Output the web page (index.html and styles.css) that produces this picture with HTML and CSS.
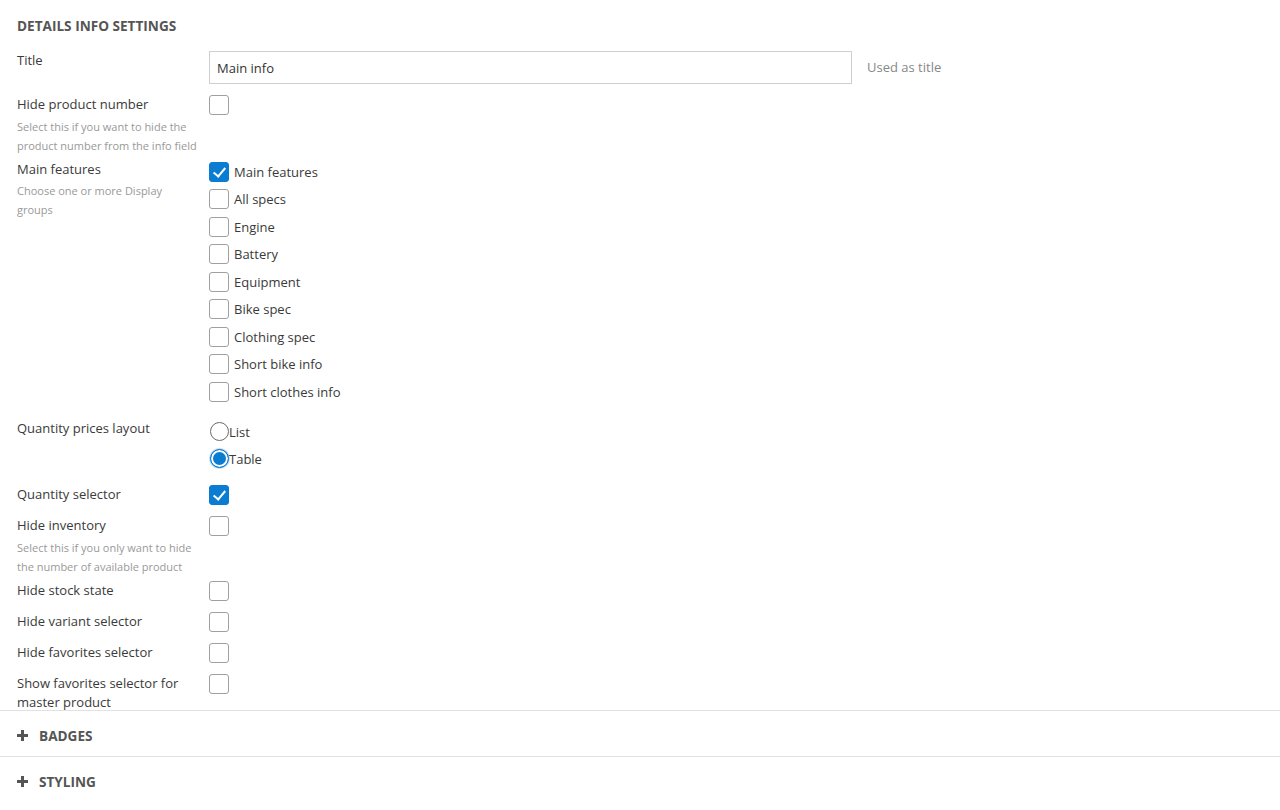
FILE: index.html
```html
<!DOCTYPE html>
<html lang="en">
<head>
    <meta charset="UTF-8">
    <title>Details info settings</title>
    <link rel="stylesheet" href="styles.css">
</head>
<body>
    <div id="settings">
        <h3 class="section-title">Details info settings</h3>

        <div class="field-row">
            <div class="field-label">Title</div>
            <div class="field-control">
                <input type="text" class="text-input" value="Main info">
                <span class="field-hint">Used as title</span>
            </div>
        </div>

        <div class="field-row">
            <div class="field-label">
                Hide product number
                <div class="field-help">Select this if you want to hide the product number from the info field</div>
            </div>
            <div class="field-control"><input type="checkbox" class="check"></div>
        </div>

        <div class="field-row">
            <div class="field-label">
                Main features
                <div class="field-help">Choose one or more Display groups</div>
            </div>
            <div class="option-list">
                <label class="option"><input type="checkbox" class="check" checked>Main features</label>
                <label class="option"><input type="checkbox" class="check">All specs</label>
                <label class="option"><input type="checkbox" class="check">Engine</label>
                <label class="option"><input type="checkbox" class="check">Battery</label>
                <label class="option"><input type="checkbox" class="check">Equipment</label>
                <label class="option"><input type="checkbox" class="check">Bike spec</label>
                <label class="option"><input type="checkbox" class="check">Clothing spec</label>
                <label class="option"><input type="checkbox" class="check">Short bike info</label>
                <label class="option"><input type="checkbox" class="check">Short clothes info</label>
            </div>
        </div>

        <div class="field-row">
            <div class="field-label">Quantity prices layout</div>
            <div class="option-list radios">
                <label class="option"><input type="radio" class="radio" name="qty-layout">List</label>
                <label class="option"><input type="radio" class="radio" name="qty-layout" checked>Table</label>
            </div>
        </div>

        <div class="field-row">
            <div class="field-label">Quantity selector</div>
            <div class="field-control"><input type="checkbox" class="check" checked></div>
        </div>

        <div class="field-row">
            <div class="field-label">
                Hide inventory
                <div class="field-help">Select this if you only want to hide the number of available product</div>
            </div>
            <div class="field-control"><input type="checkbox" class="check"></div>
        </div>

        <div class="field-row">
            <div class="field-label">Hide stock state</div>
            <div class="field-control"><input type="checkbox" class="check"></div>
        </div>

        <div class="field-row">
            <div class="field-label">Hide variant selector</div>
            <div class="field-control"><input type="checkbox" class="check"></div>
        </div>

        <div class="field-row">
            <div class="field-label">Hide favorites selector</div>
            <div class="field-control"><input type="checkbox" class="check"></div>
        </div>

        <div class="field-row last">
            <div class="field-label">Show favorites selector for master product</div>
            <div class="field-control"><input type="checkbox" class="check"></div>
        </div>
    </div>

    <div class="group-header">
        <svg class="plus" width="11" height="11" viewBox="0 0 11 11"><rect x="4" y="0" width="3" height="11"/><rect x="0" y="4" width="11" height="3"/></svg>
        <span>Badges</span>
    </div>
    <div class="group-header">
        <svg class="plus" width="11" height="11" viewBox="0 0 11 11"><rect x="4" y="0" width="3" height="11"/><rect x="0" y="4" width="11" height="3"/></svg>
        <span>Styling</span>
    </div>
</body>
</html>
```

FILE: styles.css
```css
body {
    margin: 0;
    font-family: "Open Sans", Arial, sans-serif;
    font-size: 13px;
    color: #3a3a3a;
    background-color: #ffffff;
}
#settings {
    padding: 16px 17px 0 17px;
}
.section-title {
    margin: 0 0 14px 0;
    font-size: 13.6px;
    font-weight: 700;
    line-height: 20px;
    text-transform: uppercase;
    color: #555;
}
.field-row {
    display: flex;
    align-items: flex-start;
    margin-bottom: 4px;
}
.field-row.last {
    margin-bottom: -2px;
}
.field-label {
    width: 192px;
    flex-shrink: 0;
    padding-top: 1px;
    line-height: 19px;
    padding-right: 12px;
    box-sizing: border-box;
}
.field-help {
    width: 182px;
    margin-top: 2.5px;
    font-size: 11px;
    line-height: 19px;
    color: #999;
}
.field-control {
    display: flex;
    align-items: center;
    min-height: 27px;
}
.text-input {
    width: 643px;
    height: 33px;
    box-sizing: border-box;
    margin: 1px 0 6px 0;
    padding: 0 7px;
    border: 1px solid #cfcfcf;
    border-radius: 0;
    font-family: inherit;
    font-size: 13px;
    color: #333;
    outline: none;
}
.field-hint {
    margin: -6px 0 0 15px;
    color: #888;
}
.check {
    appearance: none;
    width: 20px;
    height: 20px;
    margin: 1px 0 6px 0;
    box-sizing: border-box;
    border: 1px solid #a0a0a0;
    border-radius: 3px;
    background-color: #fff;
    position: relative;
    flex-shrink: 0;
}
.check:checked {
    background-color: #0a7cd1;
    border-color: #0a7cd1;
}
.check:checked::after {
    content: "";
    position: absolute;
    left: 6px;
    top: 2px;
    width: 5px;
    height: 10px;
    border-right: 2.5px solid #fff;
    border-bottom: 2.5px solid #fff;
    transform: rotate(40deg);
}
.option-list {
    display: flex;
    flex-direction: column;
    padding: 3px 0 5px 0;
}
.option {
    display: flex;
    height: 27.5px;
    align-items: flex-start;
    line-height: 20px;
}
.option .check {
    margin: 0 5px 0 0;
}
.radios {
    padding: 4px 0 4px 0;
}
.radios .option {
    height: 27px;
    line-height: 21px;
}
.radio {
    appearance: none;
    width: 19px;
    height: 19px;
    margin: 0 0 0 1px;
    box-sizing: border-box;
    border: 1.5px solid #6a6a6a;
    border-radius: 50%;
    background-color: #fff;
    flex-shrink: 0;
}
.radio:checked {
    border: 1px solid #0a7cd1;
    background-color: #0a7cd1;
    box-shadow: inset 0 0 0 2px #fff, 0 0 0 1px #c3ddf3;
}
.group-header {
    display: flex;
    align-items: center;
    box-sizing: border-box;
    height: 46px;
    padding: 5px 17px 0 17px;
    border-top: 1px solid #e2e2e2;
    font-size: 13.6px;
    font-weight: 700;
    text-transform: uppercase;
    color: #555;
}
.plus {
    fill: #555;
    margin-right: 11px;
}
```
